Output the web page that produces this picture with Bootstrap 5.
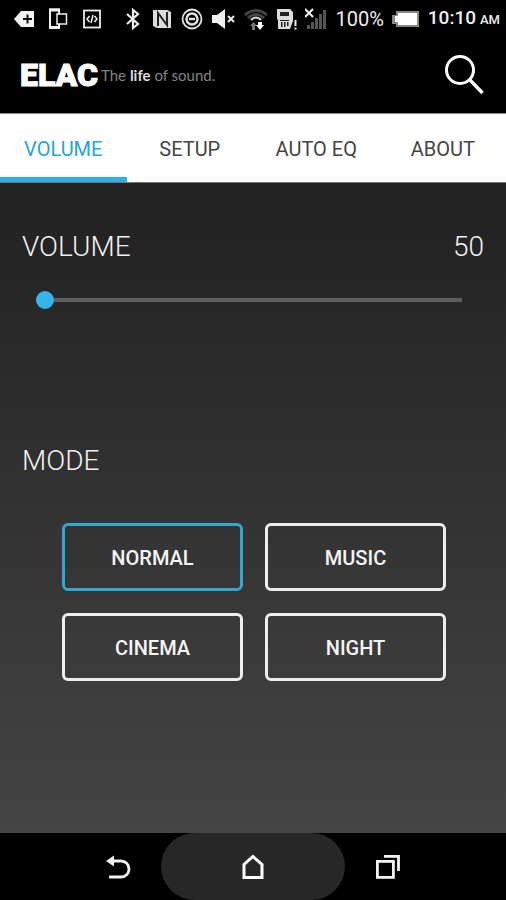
<!DOCTYPE html>
<html lang="en" class="h-100">
<head>
<meta charset="utf-8">
<meta name="viewport" content="width=device-width, initial-scale=1">
<title>ELAC – Volume</title>
<link href="https://cdn.jsdelivr.net/npm/bootstrap@5.3.0/dist/css/bootstrap.min.css" rel="stylesheet">
<style>
  body { font-family: Roboto, "Liberation Sans", sans-serif; background: #000; color: #eee; }
  svg { display: block; flex: none; }
  .status-bar { height: 36px; padding: 1px 6px 0 14px; font-size: 20px; line-height: 24px; }
  .status-left { gap: 14px; }
  .meridiem { font-size: 13px; font-weight: 500; }
  .clock { font-size: 19px; font-weight: 500; }
  .app-bar { height: 77px; padding: 0 20px; }
  .brand-link { gap: 3px; }
  .brand-name { font-weight: 900; font-size: 32px; line-height: 40px; color: #fff; -webkit-text-stroke: 1px #fff; }
  .tagline { font-family: Lato, sans-serif; font-size: 15px; line-height: 20px; color: #858585; }
  .tagline strong { color: #ddd; }
  .tabs { background: #fff; border-top: 1px solid #888; border-bottom: 1px solid #777; }
  .tabs .nav-link { border-radius: 0; height: 68px; padding: 6px 0 0; font-size: 20px; line-height: 24px; color: #444; border-bottom: 5px solid transparent; }
  .tabs .nav-link.active { color: #25a5d8; border-color: #30b1e4; }
  .panel { background: linear-gradient(#212121, #444); padding: 46px 22px 40px; }
  .panel-title { font-size: 28px; line-height: 36px; font-weight: 300; color: #f0f0f0; margin: 0; }
  .slider-wrap { padding: 25px 22px 0 14px; }
  .level { -webkit-appearance: none; appearance: none; display: block; width: 100%; height: 20px; margin: 0; background: transparent; }
  .level::-webkit-slider-runnable-track { height: 4px; background: #5e5c5e; }
  .level::-webkit-slider-thumb { -webkit-appearance: none; width: 18px; height: 18px; margin-top: -7px; border-radius: 50%; background: #35b5e8; }
  .level::-moz-range-track { height: 4px; background: #5e5c5e; }
  .level::-moz-range-thumb { width: 18px; height: 18px; border: 0; border-radius: 50%; background: #35b5e8; }
  .mode-title { margin-top: 133px; }
  .modes { display: grid; grid-template-columns: 1fr 1fr; gap: 22px; padding: 44px 38px 0 40px; }
  .mode-btn { height: 68px; border: 3px solid #eee; border-radius: 6px; color: #f5f5f5; font-size: 20px; font-weight: 500; line-height: 24px; padding: 2px 0 0; }
  .mode-btn:hover, .mode-btn.active { color: #f5f5f5; border-color: #35a5d2; }
  .sys-nav { height: 67px; }
  .sys-btn { background: none; border: 0; padding: 0; }
  .side-btn { padding: 0 30px; }
  .home-btn { width: 36.2%; background: #272727; border-radius: 34px; }
</style>
</head>
<body class="d-flex flex-column min-vh-100">
<div class="status-bar d-flex align-items-center justify-content-between">
  <div class="status-left d-flex align-items-center">
    <svg width="20" height="20" viewBox="0 0 20 20"><path d="M0 10 7 2h13v16H7z" fill="#f4f4f4"/><path d="M9 10h9M13.500 5.500v9" stroke="#111" stroke-width="2"/></svg>
    <svg width="20" height="22" viewBox="0 0 20 22" fill="none" stroke="#eee"><path d="M11 6V1.500H2v18.500h9v-4" stroke-width="2"/><path d="M1 2h11M1 19.500h11" stroke-width="3"/><rect x="9" y="6" width="9.500" height="10" stroke-width="1.500"/></svg>
    <svg width="20" height="20" viewBox="0 0 20 20" fill="none" stroke="#eee"><rect x="2" y="1.500" width="16" height="17" stroke-width="1.800"/><path d="m7.500 7-2.500 3 2.500 3M12.500 7l2.500 3-2.500 3M11 6l-2 8" stroke-width="1.500"/></svg>
  </div>
  <div class="d-flex align-items-center gap-2">
    <svg width="20" height="22" viewBox="0 0 20 22" fill="none" stroke="#eee" stroke-width="2.200"><path d="m4 6 11 10-5 4V2l5 4L4 16"/></svg>
    <svg width="22" height="22" viewBox="0 0 22 22"><path d="M2 2h14l4 2v16H6l-4-2z" fill="#ddd"/><path d="M7 18V5l9 12V4" fill="none" stroke="#222" stroke-width="2"/></svg>
    <svg width="22" height="22" viewBox="0 0 22 22" fill="none" stroke="#e4e4e4"><circle cx="11" cy="11" r="9.500" stroke-width="1.800"/><circle cx="11" cy="11" r="5.500" stroke-width="2.400"/><path d="M8 11h6" stroke-width="2.400"/></svg>
    <svg width="24" height="20" viewBox="0 0 24 20"><path d="M1 6h5l8-6v20l-8-6H1z" fill="#f0f0f0"/><path d="m17 7 6 6m0-6-6 6" stroke="#eee" stroke-width="2"/></svg>
    <svg width="26" height="24" viewBox="0 0 26 24" fill="none"><path d="M2 8q11-9 22 0M5 11q8-7 16 0" stroke="#444" stroke-width="3"/><path d="M8 13q5-5 10 0" stroke="#ddd" stroke-width="2"/><path d="M9 23v-4H7l3.500-4 3.500 4h-2v4z" fill="#777"/><path d="M15 15v3h-2l4 5 4-5h-2v-3z" fill="#fff"/></svg>
    <svg width="20" height="22" viewBox="0 0 20 22"><path d="M0 1h13l3 3v9l-3 8H1V12l-1-1z" fill="#ddd"/><path d="M3 4h9v4H3zM3 12h9v1H3zM4 14h1.500v5H4zM7 14h1.500v5H7zM10 14h1.500v4H10z" fill="#222"/><path d="M18.500 12v6M18.500 19.500v2" stroke="#eee" stroke-width="2"/></svg>
    <svg width="22" height="22" viewBox="0 0 22 22"><path d="M2 17h3v4H2zM6 14h3v7H6zM10 10h3v11h-3zM14 6h3v15h-3zM18 2h3v19h-3z" fill="#555"/><path d="m0 1 8 8m0-8L0 9" stroke="#f0f0f0" stroke-width="2.200"/></svg>
    <span>100%</span>
    <svg width="28" height="18" viewBox="0 0 28 18"><path d="M4 1h23v16H4v-3H0V5h4z" fill="#888"/><path d="M6 3h19v12H6v-3H3V6h3z" fill="#fff"/></svg>
    <span class="text-nowrap d-flex align-items-baseline gap-1"><span class="clock">10:10</span><span class="meridiem">AM</span></span>
  </div>
</div>
<header class="app-bar d-flex align-items-center justify-content-between">
  <a href="#" class="brand-link d-flex align-items-center text-decoration-none"><span class="brand-name">ELAC</span><span class="tagline">The <strong>life</strong> of sound.</span></a>
  <button type="button" class="sys-btn" aria-label="Search"><svg width="42" height="42" viewBox="0 0 42 42" fill="none" stroke="#fff"><circle cx="16" cy="16" r="13.500" stroke-width="3"/><path d="M25.500 25.500 38.500 39" stroke-width="3.400"/></svg></button>
</header>
<nav class="tabs nav nav-justified flex-nowrap">
  <a class="nav-link active d-flex align-items-center justify-content-center" aria-current="page" href="#">VOLUME</a>
  <a class="nav-link d-flex align-items-center justify-content-center" href="#">SETUP</a>
  <a class="nav-link d-flex align-items-center justify-content-center" href="#">AUTO EQ</a>
  <a class="nav-link d-flex align-items-center justify-content-center" href="#">ABOUT</a>
</nav>
<main class="panel flex-grow-1">
  <div class="d-flex justify-content-between">
    <label class="panel-title" for="level">VOLUME</label>
    <output class="panel-title" for="level">50</output>
  </div>
  <div class="slider-wrap"><input class="level" id="level" type="range" min="0" max="100" value="0"></div>
  <h2 class="panel-title mode-title">MODE</h2>
  <div class="modes">
    <button type="button" class="btn mode-btn active">NORMAL</button>
    <button type="button" class="btn mode-btn">MUSIC</button>
    <button type="button" class="btn mode-btn">CINEMA</button>
    <button type="button" class="btn mode-btn">NIGHT</button>
  </div>
</main>
<footer class="sys-nav d-flex justify-content-center">
  <button type="button" class="sys-btn side-btn flex-fill d-flex align-items-center justify-content-end" aria-label="Back"><svg width="26" height="26" viewBox="0 0 26 26"><path d="M6 7h10a8 8 0 0 1 0 16H4" fill="none" stroke="#f2f2f2" stroke-width="2.800"/><path d="M1 7l8-5.500v11z" fill="#f2f2f2"/></svg></button>
  <button type="button" class="sys-btn home-btn d-flex align-items-center justify-content-center" aria-label="Home"><svg width="26" height="26" viewBox="0 0 26 26"><path d="M4 23.500V10.500l9-8 9 8v13z" fill="none" stroke="#fff" stroke-width="3"/></svg></button>
  <button type="button" class="sys-btn side-btn flex-fill d-flex align-items-center justify-content-start" aria-label="Recent apps"><svg width="26" height="26" viewBox="0 0 26 26" fill="none" stroke="#f2f2f2" stroke-width="2.800"><rect x="2.400" y="7.400" width="16" height="16"/><path d="M9 2.400h14.500V17"/></svg></button>
</footer>
<script src="https://cdn.jsdelivr.net/npm/bootstrap@5.3.0/dist/js/bootstrap.bundle.min.js"></script>
</body>
</html>
